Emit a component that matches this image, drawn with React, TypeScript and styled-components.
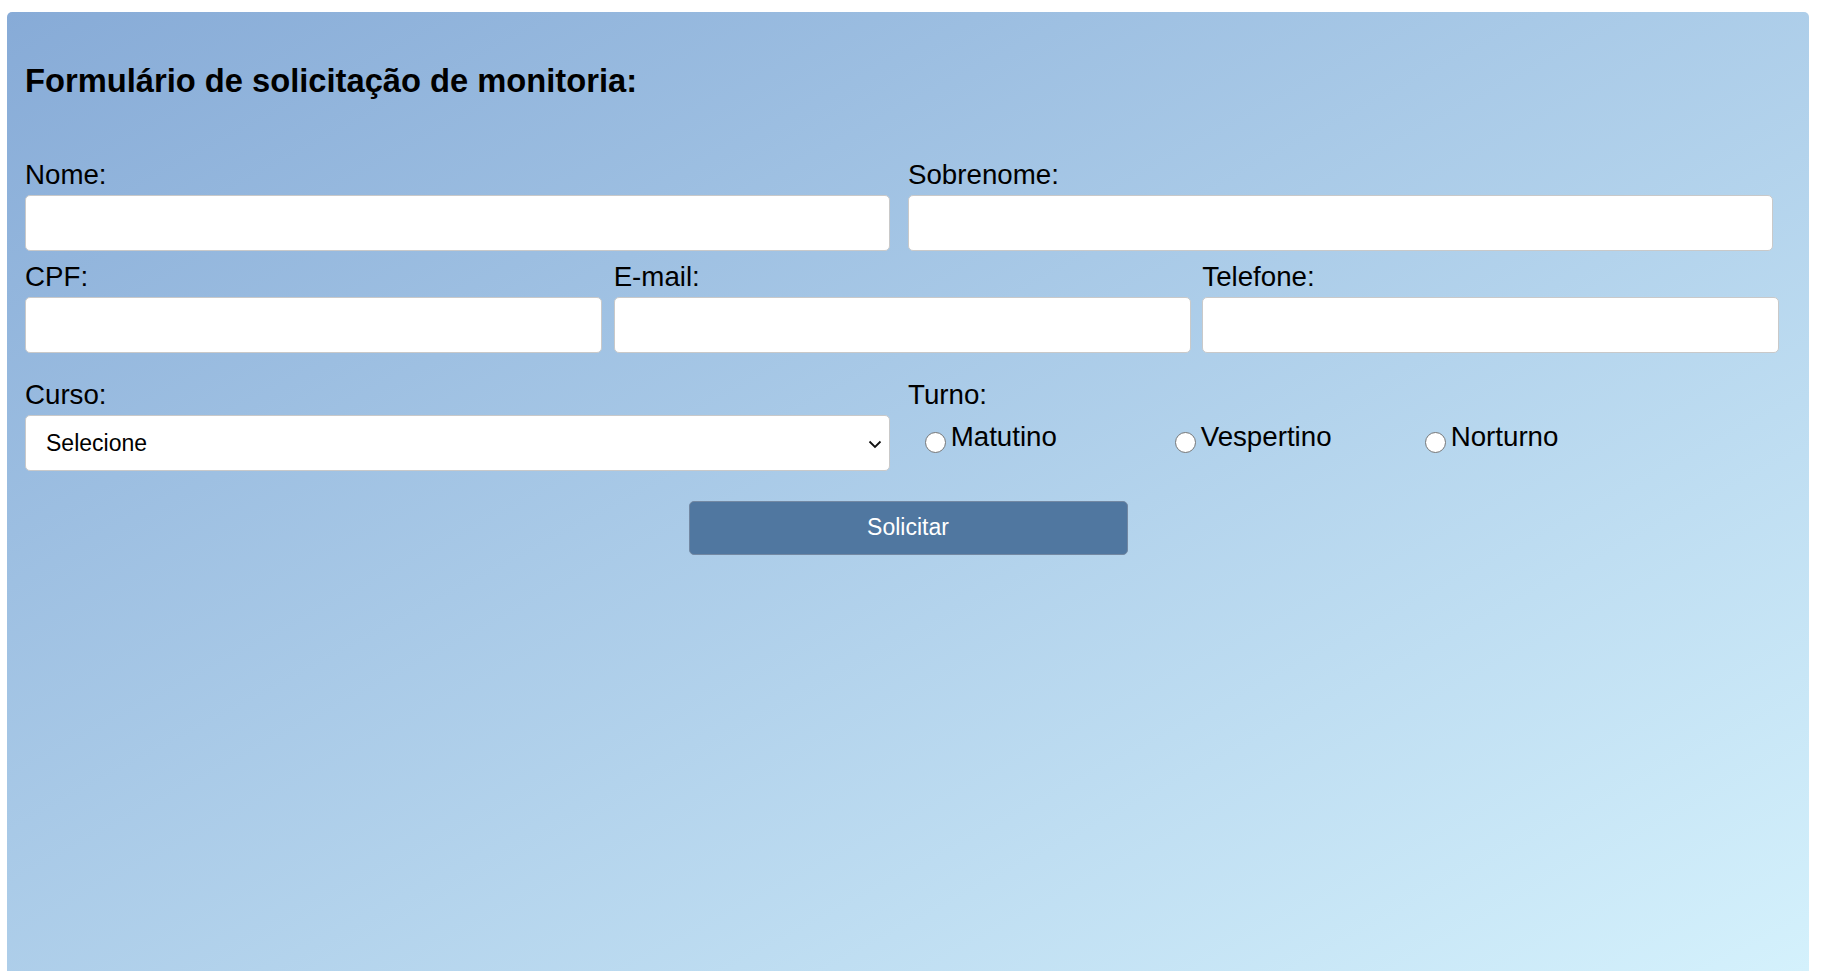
import styled, { createGlobalStyle } from 'styled-components';

const GlobalStyle = createGlobalStyle`
  body {
    margin: 0;
    overflow: hidden;
    font-family: "Liberation Sans", Arial, sans-serif;
    color: #000;
  }
`;

const StyledPage = styled.div`
  padding: 12px 14px 0 7px;
`;

const StyledCard = styled.form`
  box-sizing: border-box;
  height: calc(100vh - 12px);
  padding: 0 18px;
  border-radius: 5px 5px 0 0;
  background: linear-gradient(to bottom right, #87abd7, #d4f1fc);
`;

const StyledTitle = styled.h1`
  margin: 0;
  padding: 50px 0 60px;
  font-size: 32.7px;
  line-height: 37px;
  font-weight: bold;
`;

const StyledRow = styled.div<{ $gapAfter: number }>`
  display: flex;
  margin-bottom: ${(p) => p.$gapAfter}px;
`;

const StyledField = styled.div<{ $width: string }>`
  width: ${(p) => p.$width};
`;

const StyledLabel = styled.label`
  display: block;
  font-size: 27.7px;
  line-height: 32px;
  margin-bottom: 4px;
`;

const StyledInput = styled.input`
  box-sizing: border-box;
  display: block;
  width: 98%;
  height: 56px;
  padding: 0 20px;
  border: 1px solid #c9c9c9;
  border-radius: 5px;
  background: #fff;
  font-family: inherit;
  font-size: 23px;
  outline: none;
`;

const StyledSelectBox = styled.div`
  position: relative;
  width: 98%;
`;

const StyledSelect = styled.select`
  box-sizing: border-box;
  display: block;
  width: 100%;
  height: 56px;
  padding: 0 40px 0 20px;
  border: 1px solid #c9c9c9;
  border-radius: 5px;
  background: #fff;
  font-family: inherit;
  font-size: 23px;
  color: #000;
  appearance: none;
  outline: none;
`;

const StyledChevron = styled.svg`
  position: absolute;
  right: 8px;
  top: 50%;
  margin-top: -3px;
  pointer-events: none;
`;

const StyledRadioGroup = styled.div`
  display: grid;
  grid-template-columns: repeat(3, 250px);
  margin-top: 10px;
  padding-left: 16.7px;
`;

const StyledRadioItem = styled.label`
  display: flex;
  align-items: center;
  font-size: 27.7px;
  line-height: 32px;
`;

const StyledRadio = styled.input`
  appearance: none;
  box-sizing: border-box;
  flex-shrink: 0;
  width: 21px;
  height: 21px;
  margin: 10px 5px 0 0;
  border: 1.6px solid #767676;
  border-radius: 50%;
  background: #fff;

  &:checked {
    border: 6px solid #0075ff;
  }
`;

const StyledActions = styled.div`
  display: flex;
  justify-content: center;
`;

const StyledButton = styled.button`
  width: 439px;
  height: 54px;
  border: 1px solid #7288a3;
  border-radius: 5px;
  background: #5077a0;
  color: #fff;
  font-family: inherit;
  font-size: 23px;
  cursor: pointer;
`;

const turnos = ['Matutino', 'Vespertino', 'Norturno'];

function App() {
  return (
    <StyledPage>
      <GlobalStyle />
      <StyledCard onSubmit={ (e) => e.preventDefault() }>
        <StyledTitle>Formulário de solicitação de monitoria:</StyledTitle>

        <StyledRow $gapAfter={ 10 }>
          <StyledField $width="50%">
            <StyledLabel htmlFor="nome">Nome:</StyledLabel>
            <StyledInput id="nome" type="text" />
          </StyledField>
          <StyledField $width="50%">
            <StyledLabel htmlFor="sobrenome">Sobrenome:</StyledLabel>
            <StyledInput id="sobrenome" type="text" />
          </StyledField>
        </StyledRow>

        <StyledRow $gapAfter={ 26 }>
          <StyledField $width="33.3333%">
            <StyledLabel htmlFor="cpf">CPF:</StyledLabel>
            <StyledInput id="cpf" type="text" />
          </StyledField>
          <StyledField $width="33.3333%">
            <StyledLabel htmlFor="email">E-mail:</StyledLabel>
            <StyledInput id="email" type="email" />
          </StyledField>
          <StyledField $width="33.3333%">
            <StyledLabel htmlFor="telefone">Telefone:</StyledLabel>
            <StyledInput id="telefone" type="tel" />
          </StyledField>
        </StyledRow>

        <StyledRow $gapAfter={ 29.5 }>
          <StyledField $width="50%">
            <StyledLabel htmlFor="curso">Curso:</StyledLabel>
            <StyledSelectBox>
              <StyledSelect id="curso" defaultValue="">
                <option value="">Selecione</option>
              </StyledSelect>
              <StyledChevron width="14" height="9" viewBox="0 0 14 9">
                <polyline points="1.5,1.5 7,7 12.5,1.5" fill="none" stroke="#111" strokeWidth="1.8" />
              </StyledChevron>
            </StyledSelectBox>
          </StyledField>
          <StyledField $width="50%">
            <StyledLabel as="div">Turno:</StyledLabel>
            <StyledRadioGroup>
              { turnos.map((t) => (
                <StyledRadioItem key={ t }>
                  <StyledRadio type="radio" name="turno" value={ t } />
                  { t }
                </StyledRadioItem>
              )) }
            </StyledRadioGroup>
          </StyledField>
        </StyledRow>

        <StyledActions>
          <StyledButton type="submit">Solicitar</StyledButton>
        </StyledActions>
      </StyledCard>
    </StyledPage>
  );
}

export default App;
